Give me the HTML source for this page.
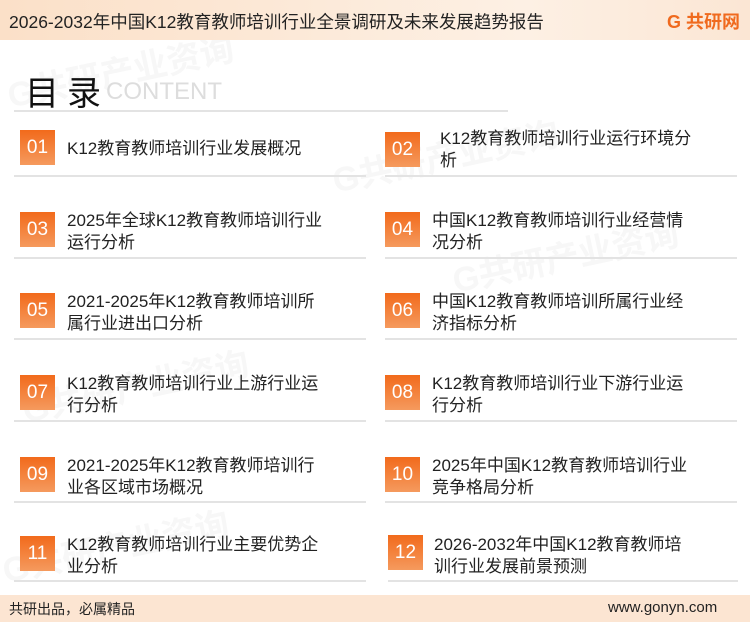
<!DOCTYPE html>
<html><head><meta charset="utf-8"><style>
body{margin:0;width:750px;height:622px;position:relative;background:#fff;font-family:"Liberation Sans","Noto Sans CJK SC",sans-serif;overflow:hidden;color:#222}
.hd{position:absolute;left:0;top:0;width:750px;height:40px;background:linear-gradient(90deg,#fbe0c8,#fdf0e4 70%,#fbe6d4)}
.hd .t{position:absolute;left:9px;top:9px;font-size:17.5px;color:#222}
.logo{position:absolute;right:10px;top:8px;font-size:18px;font-weight:bold;color:#f06a1e}
.ft{position:absolute;left:0;top:595px;width:750px;height:27px;background:#fce5d2;font-size:14px}
.wm{position:absolute;color:#f7f7f7;font-weight:bold;font-size:34px;transform:rotate(-12deg);white-space:nowrap}
.title{position:absolute;left:25px;top:66px;font-size:34px;color:#111;letter-spacing:8px}
.ct{position:absolute;left:106px;top:78px;font-size:24px;color:#ddd}
.line{position:absolute;height:2px;background:#e3e3e3}
.box{position:absolute;width:35px;height:35px;background:linear-gradient(180deg,#f26a1b,#f59a5e);color:#fff;font-size:19px;text-align:center;line-height:35px}
.tx{position:absolute;font-size:17px;line-height:22px;width:264px;color:#222}
</style></head><body>
<div class="wm" style="left:5px;top:45px">G共研产业资询</div>
<div class="wm" style="left:330px;top:130px">G共研产业资询</div>
<div class="wm" style="left:20px;top:360px">G共研产业资询</div>
<div class="wm" style="left:450px;top:230px">G共研产业资询</div>
<div class="wm" style="left:0px;top:520px">G共研产业资询</div>
<div class="hd"><div class="t">2026-2032年中国K12教育教师培训行业全景调研及未来发展趋势报告</div><div class="logo">G 共研网</div></div>
<div class="title">目录</div><div class="ct">CONTENT</div>
<div class="line" style="left:14px;top:110px;width:494px"></div>

<div class="box" style="left:20px;top:130px">01</div><div class="tx" style="left:67px;top:138px">K12教育教师培训行业发展概况</div>
<div class="box" style="left:385px;top:132px">02</div><div class="tx" style="left:440px;top:128px;width:258px">K12教育教师培训行业运行环境分析</div>
<div class="line" style="left:14px;top:175px;width:352px"></div>
<div class="line" style="left:385px;top:175px;width:352px"></div>

<div class="box" style="left:20px;top:212px">03</div><div class="tx" style="left:67px;top:210px">2025年全球K12教育教师培训行业运行分析</div>
<div class="box" style="left:385px;top:212px">04</div><div class="tx" style="left:432px;top:210px">中国K12教育教师培训行业经营情况分析</div>
<div class="line" style="left:14px;top:257px;width:352px"></div><div class="line" style="left:385px;top:257px;width:352px"></div>

<div class="box" style="left:20px;top:293px">05</div><div class="tx" style="left:67px;top:291px">2021-2025年K12教育教师培训所属行业进出口分析</div>
<div class="box" style="left:385px;top:293px">06</div><div class="tx" style="left:432px;top:291px">中国K12教育教师培训所属行业经济指标分析</div>
<div class="line" style="left:14px;top:338px;width:352px"></div><div class="line" style="left:385px;top:338px;width:352px"></div>

<div class="box" style="left:20px;top:375px">07</div><div class="tx" style="left:67px;top:373px">K12教育教师培训行业上游行业运行分析</div>
<div class="box" style="left:385px;top:375px">08</div><div class="tx" style="left:432px;top:373px">K12教育教师培训行业下游行业运行分析</div>
<div class="line" style="left:14px;top:420px;width:352px"></div><div class="line" style="left:385px;top:420px;width:352px"></div>

<div class="box" style="left:20px;top:457px">09</div><div class="tx" style="left:67px;top:455px">2021-2025年K12教育教师培训行业各区域市场概况</div>
<div class="box" style="left:385px;top:457px">10</div><div class="tx" style="left:432px;top:455px">2025年中国K12教育教师培训行业竞争格局分析</div>
<div class="line" style="left:14px;top:501px;width:352px"></div><div class="line" style="left:385px;top:501px;width:352px"></div>

<div class="box" style="left:20px;top:536px">11</div><div class="tx" style="left:67px;top:534px">K12教育教师培训行业主要优势企业分析</div>
<div class="box" style="left:388px;top:535px">12</div><div class="tx" style="left:434px;top:534px">2026-2032年中国K12教育教师培训行业发展前景预测</div>
<div class="line" style="left:14px;top:580px;width:352px"></div><div class="line" style="left:388px;top:580px;width:350px"></div>

<div class="ft"><span style="position:absolute;left:9px;top:4px">共研出品，必属精品</span><span style="position:absolute;left:608px;top:4px;font-size:15px">www.gonyn.com</span></div>
</body></html>
